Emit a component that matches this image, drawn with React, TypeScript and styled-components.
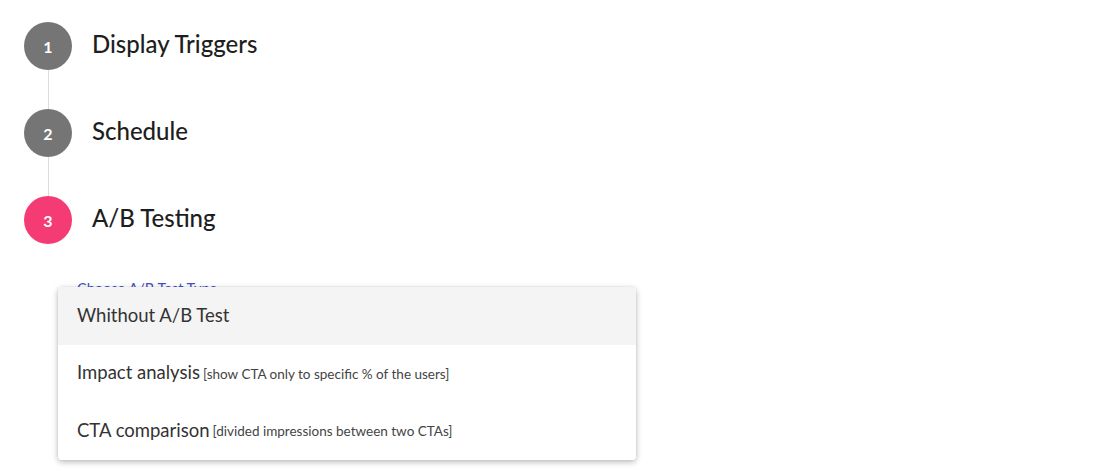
import React from 'react';
import styled, { createGlobalStyle } from 'styled-components';

const GlobalStyle = createGlobalStyle`
  html, body {
    margin: 0;
    padding: 0;
    background: #ffffff;
    font-family: 'Lato', 'Noto Sans', sans-serif;
  }
`;

const Page = styled.div`
  width: 1109px;
  height: 471px;
  padding: 22px 0 0 24px;
  box-sizing: border-box;
  position: relative;
  overflow: hidden;
`;

const Step = styled.div`
  display: flex;
  flex-direction: column;
`;

const StepHead = styled.div`
  display: flex;
  align-items: center;
  gap: 20px;
`;

const Circle = styled.div<{ $active?: boolean }>`
  width: 48px;
  height: 48px;
  border-radius: 50%;
  background: ${(p) => (p.$active ? '#f53b73' : '#757575')};
  color: #fff;
  font-size: 16px;
  font-weight: 700;
  display: flex;
  align-items: center;
  justify-content: center;
  flex-shrink: 0;
`;

const Title = styled.div`
  font-size: 24px;
  font-weight: 500;
  color: #1e1e1e;
  line-height: 28px;
  margin-top: -4px;
`;

const Connector = styled.div`
  width: 1px;
  height: 39px;
  margin-left: 24px;
  background: #dcdcdc;
`;

const Spacer = styled.div`
  height: 37px;
`;

const Field = styled.div`
  position: relative;
  margin-left: 53px;
`;

const Label = styled.div`
  font-size: 14.5px;
  color: #3f51c4;
  line-height: 16px;
`;

const Menu = styled.div`
  position: absolute;
  top: 6px;
  left: -19px;
  width: 578px;
  background: #fff;
  border-radius: 4px;
  box-shadow: 0 2px 6px rgba(0, 0, 0, 0.28), 0 0 2px rgba(0, 0, 0, 0.08);
  overflow: hidden;
`;

const Option = styled.div<{ $selected?: boolean }>`
  height: 58px;
  padding: 0 19px 3px;
  box-sizing: border-box;
  display: flex;
  align-items: center;
  gap: 3px;
  background: ${(p) => (p.$selected ? '#f4f4f4' : '#fff')};
  color: #333;
  font-size: 18.5px;
  white-space: nowrap;

  &:nth-child(2) {
    height: 57px;
  }
`;

const Hint = styled.span`
  font-size: 13.5px;
  color: #444;
  padding-top: 3px;
`;

const steps = ['Display Triggers', 'Schedule', 'A/B Testing'];

const options = [
  { label: 'Whithout A/B Test' },
  { label: 'Impact analysis', hint: '[show CTA only to specific % of the users]' },
  { label: 'CTA comparison', hint: '[divided impressions between two CTAs]' },
];

const App: React.FC = () => {
  return (
    <>
      <GlobalStyle />
      <Page>
        {steps.map((s, i) => (
          <Step key={s}>
            <StepHead>
              <Circle $active={i === 2}>{i + 1}</Circle>
              <Title>{s}</Title>
            </StepHead>
            {i < 2 ? <Connector /> : <Spacer />}
          </Step>
        ))}
        <Field>
          <Label>Choose A/B Test Type</Label>
          <Menu>
            {options.map((o, i) => (
              <Option key={o.label} $selected={i === 0}>
                {o.label}
                {o.hint && <Hint>{o.hint}</Hint>}
              </Option>
            ))}
          </Menu>
        </Field>
      </Page>
    </>
  );
};

export default App;
